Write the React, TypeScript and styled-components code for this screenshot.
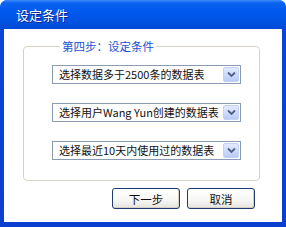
import React from 'react'
import styled, { createGlobalStyle } from 'styled-components'

const GlobalStyle = createGlobalStyle`
  html, body {
    margin: 0;
    padding: 0;
    background: #ffffff;
  }
  body {
    font-family: "Noto Sans CJK SC", "DejaVu Sans", sans-serif;
  }
`

const Window = styled.div`
  width: 286px;
  height: 227px;
  display: flex;
  flex-direction: column;
  background: linear-gradient(180deg, #0a5ee8 0px, #0058ee 6px, #0054e3 20px, #0047d0 29px, #0845d9 30px, #0a3fcf 100%);
  border-radius: 7px 7px 0 0;
  box-sizing: border-box;
  overflow: hidden;
`

const TitleBar = styled.div`
  height: 29px;
  flex: none;
  display: flex;
  align-items: center;
  padding-left: 16px;
  color: #ffffff;
  font-size: 13px;
  text-shadow: 1px 1px 0 #0a1e8c;
  background: linear-gradient(180deg, #3d8bfb 0px, #0a63f0 3px, #0058ee 12px, #0053e1 22px, #0049d4 29px);
  border-radius: 7px 7px 0 0;
`

const Body = styled.div`
  flex: 1;
  margin: 0 4px 5px 4px;
  background: #ffffff;
  display: flex;
  flex-direction: column;
`

const Group = styled.fieldset`
  margin: 9px 0 0 19px;
  width: 237px;
  box-sizing: border-box;
  padding: 11px 0 20px 28px;
  border: 1px solid #d5d2c4;
  border-radius: 4px;
  display: flex;
  flex-direction: column;
  gap: 19px;
`

const Legend = styled.legend`
  margin-left: 8px;
  padding: 0 2px;
  height: 16px;
  line-height: 16px;
  font-size: 11.5px;
  color: #1c4fd0;
`

const Combo = styled.div`
  width: 189px;
  height: 19px;
  box-sizing: border-box;
  border: 1px solid #8a9cb4;
  background: #ffffff;
  display: flex;
  align-items: center;
  padding: 1px;
`

const ComboText = styled.span`
  flex: 1;
  padding-left: 5px;
  font-size: 11px;
  line-height: 15px;
  color: #111111;
  white-space: nowrap;
`

const ComboButton = styled.span`
  width: 16px;
  height: 15px;
  flex: none;
  box-sizing: border-box;
  border: 1px solid #c3d1f3;
  border-radius: 2px;
  background: linear-gradient(180deg, #e1eafe 0%, #cad8fc 60%, #b8caf7 100%);
  display: flex;
  align-items: center;
  justify-content: center;
`

const Footer = styled.div`
  display: flex;
  justify-content: flex-end;
  gap: 7px;
  padding: 7px 27px 0 0;
`

const Button = styled.button`
  width: 68px;
  height: 21px;
  box-sizing: border-box;
  border: 1px solid #1c3a6e;
  border-radius: 3px;
  background: linear-gradient(180deg, #ffffff 0%, #f6f6f3 60%, #e4e3dc 100%);
  box-shadow: inset -1px -1px 0 #d6d0c5;
  font-family: "Noto Sans CJK SC", "DejaVu Sans", sans-serif;
  font-size: 11.5px;
  color: #111111;
  padding: 0;
`

const Chevron = () => (
  <svg width="9" height="7" viewBox="0 0 9 7">
    <path d="M1 1.5 L4.5 5 L8 1.5" stroke="#4d6185" strokeWidth="1.8" fill="none" />
  </svg>
)

const Dropdown = ({ label }: { label: string }) => (
  <Combo>
    <ComboText>{label}</ComboText>
    <ComboButton><Chevron /></ComboButton>
  </Combo>
)

const options = [
  '选择数据多于2500条的数据表',
  '选择用户Wang Yun创建的数据表',
  '选择最近10天内使用过的数据表',
]

const App = (): JSX.Element => {
  return (
    <>
      <GlobalStyle />
      <Window>
        <TitleBar>设定条件</TitleBar>
        <Body>
          <Group>
            <Legend>第四步：设定条件</Legend>
            {options.map((o) => <Dropdown key={o} label={o} />)}
          </Group>
          <Footer>
            <Button>下一步</Button>
            <Button>取消</Button>
          </Footer>
        </Body>
      </Window>
    </>
  )
}

export default App
